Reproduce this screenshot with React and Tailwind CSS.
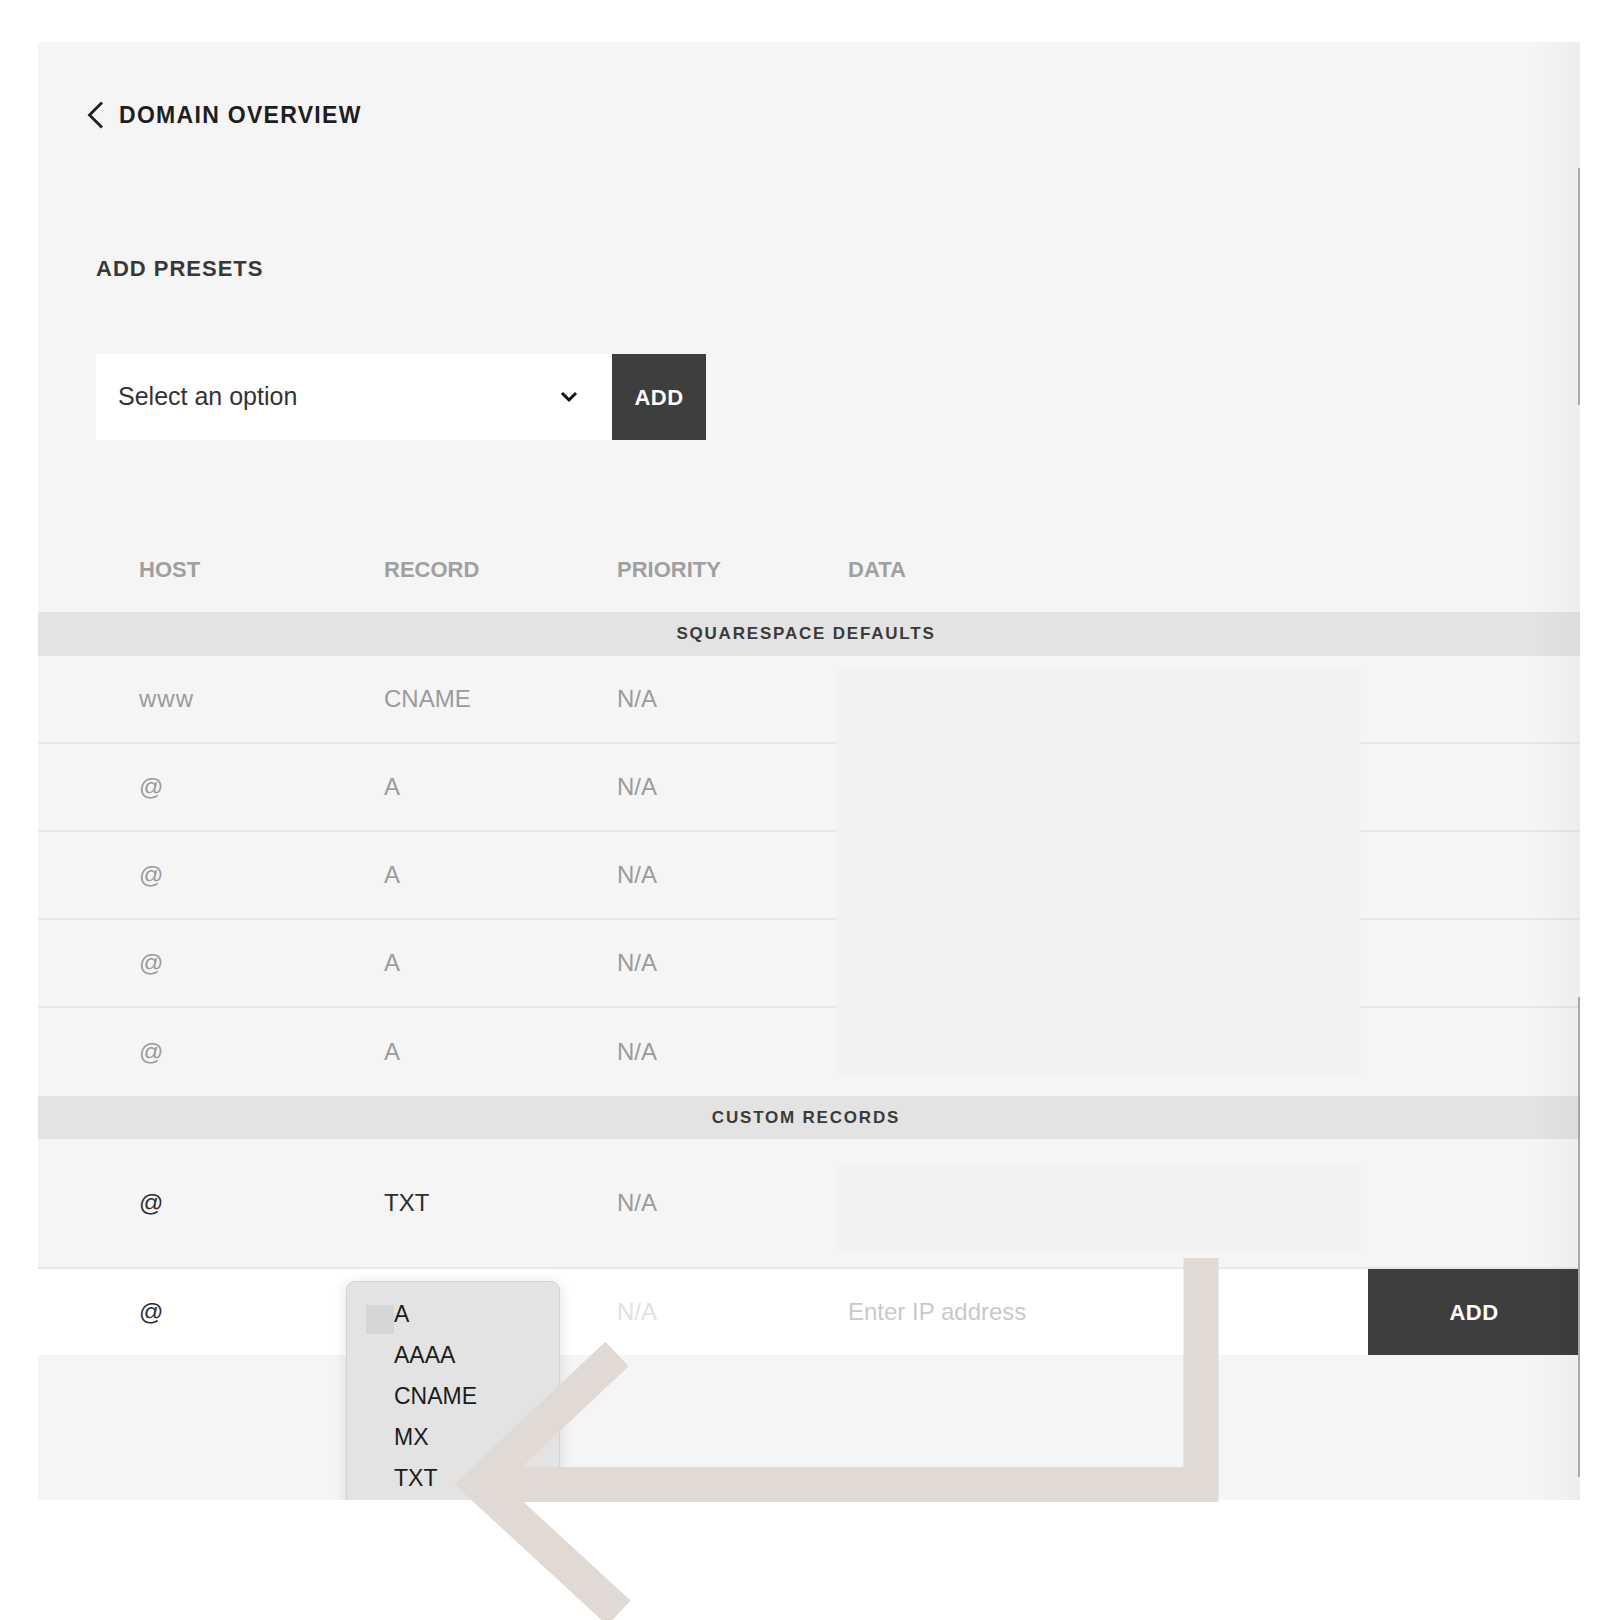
import React from 'react'

const defaults = [
    { host: 'www', record: 'CNAME' },
    { host: '@', record: 'A' },
    { host: '@', record: 'A' },
    { host: '@', record: 'A' },
    { host: '@', record: 'A' },
]

const recordTypes = ['A', 'AAAA', 'CNAME', 'MX', 'TXT']

function ChevronLeft() {
    return (
        <svg width="17" height="28" viewBox="0 0 17 28" fill="none">
            <polyline points="15,1.5 2.5,14 15,26.5" stroke="#1f1f1f" strokeWidth="2.8" strokeLinejoin="miter" />
        </svg>
    )
}

function ChevronDown() {
    return (
        <svg width="18" height="12" viewBox="0 0 18 12" fill="none">
            <polyline points="2,2 9,9 16,2" stroke="#111" strokeWidth="3" />
        </svg>
    )
}

function Row({ children, className = '' }) {
    return (
        <div className={`grid grid-cols-[245px_233px_231px_1fr] items-center pl-[101px] ${className}`}>
            {children}
        </div>
    )
}

export default function App() {
    return (
        <div className="relative w-[1620px] h-[1620px] bg-white overflow-hidden pt-[42px] pl-[38px] font-['Liberation_Sans',Arial,sans-serif]">
            {/* Panel */}
            <div className="relative w-[1542px] h-[1458px] bg-[#f5f5f5] overflow-hidden">
                {/* Back link */}
                <div className="h-[146px] flex items-center gap-[15px] pl-[49px]">
                    <ChevronLeft />
                    <span className="text-[23px] tracking-[1.3px] font-bold text-[#1e1e1e]">DOMAIN OVERVIEW</span>
                </div>

                {/* Presets */}
                <div className="h-[160px] flex items-center pl-[58px]">
                    <h2 className="text-[22px] tracking-[1px] font-bold text-[#383838]">ADD PRESETS</h2>
                </div>
                <div className="mt-[6px] ml-[58px] flex h-[86px]">
                    <div className="w-[516px] bg-white flex items-center justify-between pl-[22px] pr-[34px]">
                        <span className="text-[25px] text-[#333]">Select an option</span>
                        <ChevronDown />
                    </div>
                    <button className="w-[94px] bg-[#3e3e3e] text-white text-[22px] font-bold tracking-[0.5px]">ADD</button>
                </div>

                {/* Table header */}
                <Row className="mt-[86px] h-[86px] text-[22px] font-bold text-[#a0a0a0]">
                    <span>HOST</span>
                    <span>RECORD</span>
                    <span>PRIORITY</span>
                    <span>DATA</span>
                </Row>

                <div className="h-[44px] bg-[#e3e3e3] flex items-center justify-center pr-[6px] text-[17px] font-bold tracking-[1.8px] text-[#3a3a3a]">
                    SQUARESPACE DEFAULTS
                </div>

                {defaults.map((r, i) => (
                    <Row
                        key={i}
                        className={`h-[88px] text-[24px] text-[#9b9b9b] ${i < defaults.length - 1 ? 'border-b-2 border-[#e7e7e7]' : ''}`}
                    >
                        <span className="tracking-[1px]">{r.host}</span>
                        <span>{r.record}</span>
                        <span>N/A</span>
                        <span />
                    </Row>
                ))}

                <div className="h-[43px] bg-[#e3e3e3] flex items-center justify-center pr-[6px] text-[17px] font-bold tracking-[1.8px] text-[#3a3a3a]">
                    CUSTOM RECORDS
                </div>

                <Row className="h-[130px] text-[24px] border-b-2 border-[#e7e7e7]">
                    <span className="text-[#2e2e2e]">@</span>
                    <span className="text-[#2e2e2e]">TXT</span>
                    <span className="text-[#9b9b9b]">N/A</span>
                    <span />
                </Row>

                {/* New record row */}
                <div className="flex h-[86px] bg-white">
                    <Row className="flex-1 text-[24px]">
                        <span className="text-[#2e2e2e]">@</span>
                        <span />
                        <span className="text-[#e2e2e2]">N/A</span>
                        <span className="text-[#c9c9c9]">Enter IP address</span>
                    </Row>
                    <button className="w-[212px] bg-[#3e3e3e] text-white text-[22px] font-bold tracking-[0.5px]">ADD</button>
                </div>

                {/* Redacted data */}
                <div className="absolute left-[798px] top-[626px] w-[524px] h-[406px] bg-[#f2f2f2] blur-[1px]" />
                <div className="absolute left-[798px] top-[1124px] w-[524px] h-[84px] bg-[#f2f2f2] blur-[1px]" />

                {/* Record type menu */}
                <div className="absolute left-[308px] top-[1239px] w-[214px] h-[280px] rounded-[9px] bg-[#e3e3e3] border border-[#d3d3d3] shadow-[0_2px_14px_rgba(0,0,0,0.12)] pt-[12px]">
                    <div className="absolute left-[19px] top-[23px] w-[28px] h-[29px] bg-[#d6d6d6]" />
                    {recordTypes.map((t) => (
                        <div key={t} className="relative h-[41px] flex items-center pl-[47px] text-[23px] text-[#1c1c1c]">
                            {t}
                        </div>
                    ))}
                </div>

                {/* Right edge shade */}
                <div className="absolute right-0 top-0 bottom-0 w-[48px] bg-linear-to-r from-transparent to-black/[0.03]" />
                <div className="absolute right-0 top-[126px] w-[2px] h-[237px] bg-[#a8a8a8]" />
                <div className="absolute right-0 top-[955px] w-[2px] h-[480px] bg-[#a8a8a8]" />
            </div>

            {/* Annotation arrow */}
            <svg className="absolute inset-0 pointer-events-none" width="1620" height="1620" viewBox="0 0 1620 1620" fill="none">
                <path d="M1201 1258 V1484.5 H500" stroke="#e1dad4" strokeWidth="35" strokeLinejoin="miter" />
                <path d="M617 1354 L479 1484 L619 1613" stroke="#e1dad4" strokeWidth="34" strokeLinejoin="miter" strokeMiterlimit="4" />
            </svg>
        </div>
    )
}
